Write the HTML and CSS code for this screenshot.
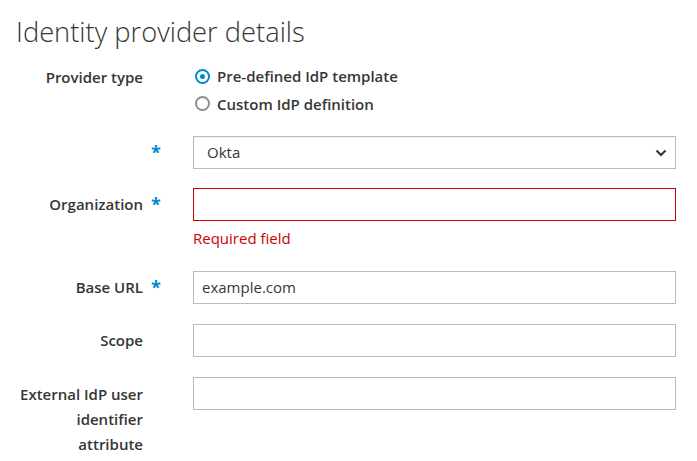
FILE: index.html
```html
<!DOCTYPE html>
<html lang="en">
<head>
    <meta charset="UTF-8">
    <title>Identity provider details</title>
    <link rel="stylesheet" href="styles.css">
</head>
<body>
    <h1 class="page-title">Identity provider details</h1>

    <form class="idp-form">
        <div class="form-row">
            <span class="form-label">Provider type</span>
            <span class="req"></span>
            <div class="radio-group">
                <label class="radio"><span class="radio-dot checked"></span>Pre-defined IdP template</label>
                <label class="radio"><span class="radio-dot"></span>Custom IdP definition</label>
            </div>
        </div>

        <div class="form-row">
            <span class="form-label"></span>
            <span class="req">*</span>
            <div class="select-box">
                <span>Okta</span>
                <svg class="chevron" width="12" height="8" viewBox="0 0 12 8">
                    <path d="M1.5 1.5 L6 6 L10.5 1.5" fill="none" stroke="#363636" stroke-width="2.2"/>
                </svg>
            </div>
        </div>

        <div class="form-row">
            <span class="form-label">Organization</span>
            <span class="req">*</span>
            <div>
                <div class="text-input error"></div>
                <div class="help-error">Required field</div>
            </div>
        </div>

        <div class="form-row">
            <span class="form-label">Base URL</span>
            <span class="req">*</span>
            <div class="text-input">example.com</div>
        </div>

        <div class="form-row">
            <span class="form-label">Scope</span>
            <span class="req"></span>
            <div class="text-input"></div>
        </div>

        <div class="form-row">
            <span class="form-label long">External IdP user identifier attribute</span>
            <span class="req"></span>
            <div class="text-input"></div>
        </div>
    </form>
</body>
</html>
```

FILE: styles.css
```css
body {
    margin: 0;
    padding: 0 21px 0 16px;
    font-family: "Open Sans", "Noto Sans", sans-serif;
    color: #363636;
    background: #fff;
}

.page-title {
    margin: 13px 0 10px;
    font-size: 27.3px;
    font-weight: 300;
    line-height: 38px;
    color: #363636;
}

.form-row {
    display: grid;
    grid-template-columns: 127px 50px 1fr;
    align-items: start;
    margin-bottom: 20px;
    font-size: 15px;
    line-height: 24.5px;
}

.form-row:nth-child(2) {
    margin-bottom: 19px;
}

.form-label {
    font-weight: 600;
    text-align: right;
    padding-top: 4px;
}

/* wrapped labels sit a little lower, with looser lines */
.form-label.long {
    padding-top: 5px;
    line-height: 25px;
}

.req {
    color: #0088ce;
    font-weight: 700;
    font-size: 18px;
    padding: 4px 0 0 8px;
}

.radio-group {
    display: flex;
    flex-direction: column;
    gap: 3px;
    padding-top: 3px;
}

.radio {
    display: flex;
    align-items: center;
    gap: 7px;
    font-weight: 600;
}

.radio-dot {
    width: 15px;
    height: 15px;
    box-sizing: border-box;
    border: 2px solid #8b8d8f;
    border-radius: 50%;
    margin-left: 2px;
    position: relative;
}

.radio-dot.checked {
    border-color: #0088ce;
}

.radio-dot.checked::after {
    content: "";
    position: absolute;
    left: 3px;
    top: 3px;
    width: 5px;
    height: 5px;
    border-radius: 50%;
    background: #0088ce;
}

.select-box,
.text-input {
    height: 33px;
    box-sizing: border-box;
    border: 1px solid #bbb;
    padding: 0 8px;
    display: flex;
    align-items: center;
    color: #363636;
}

.select-box {
    justify-content: space-between;
    padding: 0 8px 0 13px;
    box-shadow: inset 0 1px 1px rgba(3, 3, 3, 0.05);
}

.text-input.error {
    border-color: #c00;
}

.help-error {
    color: #c00;
    margin-top: 5px;
}
```
